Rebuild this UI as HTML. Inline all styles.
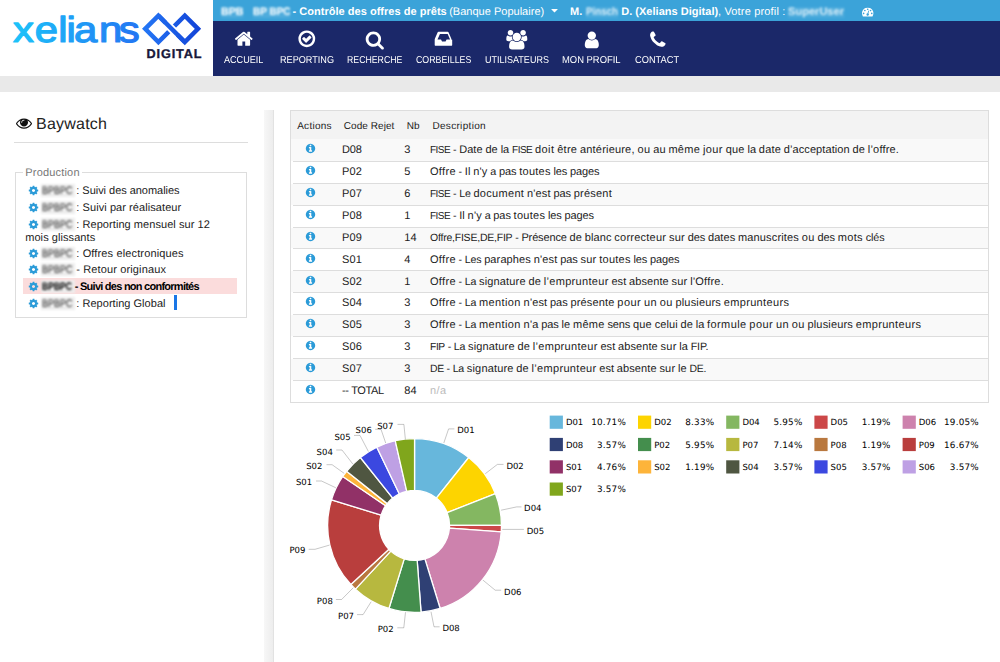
<!DOCTYPE html>
<html lang="fr"><head><meta charset="utf-8"><title>Baywatch</title>
<style>
html,body{margin:0;padding:0}
body{text-rendering:geometricPrecision;width:1000px;height:662px;overflow:hidden;background:#fff;position:relative;font-family:"Liberation Sans",sans-serif;color:#222}
.abs,.ic,.t{position:absolute}
.t{white-space:pre;line-height:1}
.ic{display:block;overflow:visible}
.w{display:inline-block;white-space:pre}
.s{display:inline-block;white-space:pre;transform-origin:0 50%}
.blur{filter:blur(0.9px);background:rgba(255,255,255,.1)}
.blur2{filter:blur(1.1px)}
#topbar{left:213px;top:0;width:787px;height:21px;background:#3ba3d9}
#nav{left:213px;top:21px;width:787px;height:54.5px;background:#1b2869}
#strip{left:0;top:75.5px;width:1000px;height:16.3px;background:#e9e9e9}
.nv{color:#fff;font-size:10px}
.tb{color:#fff;font-size:11px;top:6px}
.b{font-weight:bold}
.li{font-size:11px;color:#222}
.th{font-size:10px;color:#222}
.td{font-size:11px;color:#222}
.lg,.pl{font-family:"DejaVu Sans",sans-serif;font-size:8.5px;color:#000}
</style></head><body>

<div class="abs" id="topbar"></div><div class="abs" id="nav"></div><div class="abs" id="strip"></div>
<svg class="abs" style="left:0;top:0" width="213" height="75" viewBox="0 0 213 75">
<defs><linearGradient id="g1" x1="12" y1="0" x2="138" y2="0" gradientUnits="userSpaceOnUse"><stop offset="0" stop-color="#1cc4f9"/><stop offset="1" stop-color="#2276f3"/></linearGradient>
<linearGradient id="g1b" x1="11" y1="0" x2="126" y2="0" gradientUnits="userSpaceOnUse"><stop offset="0" stop-color="#1cc4f9"/><stop offset="1" stop-color="#2276f3"/></linearGradient>
<linearGradient id="g2" x1="142" y1="0" x2="202" y2="0" gradientUnits="userSpaceOnUse"><stop offset="0" stop-color="#2478f6"/><stop offset="1" stop-color="#1241d6"/></linearGradient></defs>
<text transform="scale(1.1,0.95)" x="11.86 31.64 52.85 60.53 67.2 89.9 107.9" y="44.2" font-family="Liberation Sans, sans-serif" font-size="38" fill="url(#g1b)" stroke="url(#g1b)" stroke-width="1.3" stroke-linejoin="round">xelians</text>
<g fill="none" stroke="url(#g2)" stroke-width="4.5" stroke-linejoin="miter">
<path d="M171.6 28.8 L158.4 42 L145.2 28.8 L158.4 15.6 Z M171.6 28.8 L184.8 15.6 L198 28.8 L184.8 42 Z"/>
<path d="M165.6 22.8 L177.6 34.8" stroke="#fff" stroke-width="8.1"/>
<path d="M158.4 15.6 L184.8 42"/>
</g>
<text x="146.6" y="58" font-family="Liberation Sans, sans-serif" font-size="12.7" font-weight="bold" letter-spacing="0.85" fill="#17183a" stroke="#17183a" stroke-width="0.35">DIGITAL</text>
</svg>
<span class="t tb b blur" style="left:221px;top:6.5px;transform:scaleX(0.9684);transform-origin:0 0;">BPB</span>
<span class="t tb b blur" style="left:253px;top:6.5px;transform:scaleX(0.9063);transform-origin:0 0;">BP BPC</span>
<span class="t tb b" style="left:292.5px;top:6.5px;letter-spacing:0.027px;">- Contrôle des offres de prêts</span>
<span class="t tb" style="left:449.2px;top:6.5px;letter-spacing:0.012px;">(Banque Populaire)</span>
<svg class="ic" style="left:549px;top:4.5px;width:11.00px;height:11px;" viewBox="0 0 1792 1792"><path fill="#fff" d="M1408 704q0 26-19 45l-448 448q-19 19-45 19t-45-19l-448-448q-19-19-19-45t19-45 45-19h896q26 0 45 19t19 45z"/></svg>
<span class="t tb b" style="left:570px;top:6.5px;">M.</span>
<span class="t tb b blur" style="left:586px;top:6.5px;opacity:.8;transform:scaleX(0.8870);transform-origin:0 0;">Pinsch</span>
<span class="t tb b" style="left:621.2px;top:6.5px;letter-spacing:0.022px;">D. (Xelians Digital)</span>
<span class="t tb" style="left:718px;top:6.5px;letter-spacing:0.166px;">, Votre profil :</span>
<span class="t tb b blur" style="left:788px;top:6.5px;opacity:.8;transform:scaleX(1.0065);transform-origin:0 0;">SuperUser</span>
<svg class="ic" style="left:861.8px;top:6px;width:11.40px;height:11.4px;" viewBox="0 0 1792 1792"><path fill="#fff" d="M384 1152q0-53-37.500-90.500t-90.500-37.500-90.500 37.500-37.500 90.500 37.500 90.500 90.500 37.500 90.500-37.500 37.500-90.500zm192-448q0-53-37.500-90.500t-90.500-37.500-90.500 37.500-37.500 90.500 37.500 90.500 90.500 37.500 90.500-37.500 37.500-90.500zm428 481l101-382q6-26-7.500-48.500t-38.500-29.500-48 6.500-30 39.500l-101 382q-60 5-107 43.500t-63 98.500q-20 77 20 146t117 89 146-20 89-117q16-60-6-117t-72-91zm660-33q0-53-37.500-90.500t-90.500-37.500-90.500 37.500-37.500 90.500 37.500 90.500 90.500 37.500 90.500-37.500 37.500-90.500zm-640-640q0-53-37.500-90.500t-90.500-37.500-90.500 37.500-37.500 90.500 37.500 90.500 90.500 37.500 90.500-37.500 37.500-90.500zm448 192q0-53-37.500-90.500t-90.500-37.500-90.500 37.500-37.500 90.500 37.500 90.500 90.500 37.500 90.500-37.500 37.500-90.500zm320 448q0 261-141 483-19 29-54 29h-1402q-35 0-54-29-141-221-141-483 0-182 71-348t191-286 286-191 348-71 348 71 286 191 191 286 71 348z"/></svg>
<span class="t nv" style="left:223.60000000000002px;top:55.6px;transform:scaleX(0.9064);transform-origin:0 0;">ACCUEIL</span>
<svg class="ic" style="left:234.0px;top:29.1px;width:19.60px;height:19.6px;" viewBox="0 0 1792 1792"><path fill="#fff" d="M1472 992v480q0 26-19 45t-45 19h-384v-384h-256v384h-384q-26 0-45-19t-19-45v-480q0-1 .5-3t.5-3l575-474 575 474q1 2 1 6zm223-69l-62 74q-8 9-21 11h-3q-13 0-21-7l-692-577-692 577q-12 8-24 7-13-2-21-11l-62-74q-8-10-7-23.500t11-21.500l719-599q32-26 76-26t76 26l244 204v-195q0-14 9-23t23-9h192q14 0 23 9t9 23v408l219 182q10 8 11 21.500t-7 23.500z"/></svg>
<span class="t nv" style="left:279.8px;top:55.6px;transform:scaleX(0.9109);transform-origin:0 0;">REPORTING</span>
<svg class="ic" style="left:296.9px;top:29.1px;width:19.60px;height:19.6px;" viewBox="0 0 1792 1792"><path fill="#fff" d="M1299 813l-422 422q-19 19-45 19t-45-19l-294-294q-19-19-19-45t19-45l102-102q19-19 45-19t45 19l147 147 275-275q19-19 45-19t45 19l102 102q19 19 19 45t-19 45zm141 83q0-148-73-273t-198-198-273-73-273 73-198 198-73 273 73 273 198 198 273 73 273-73 198-198 73-273zm224 0q0 209-103 385.500t-279.500 279.500-385.500 103-385.500-103-279.500-279.500-103-385.500 103-385.500 279.500-279.500 385.500-103 385.500 103 279.500 279.500 103 385.500z"/></svg>
<span class="t nv" style="left:347.3px;top:55.6px;transform:scaleX(0.8746);transform-origin:0 0;">RECHERCHE</span>
<svg class="ic" style="left:365.0px;top:29.900000000000002px;width:19.60px;height:19.6px;" viewBox="0 0 1792 1792"><path fill="#fff" d="M1216 832q0-185-131.500-316.500t-316.500-131.500-316.500 131.500-131.500 316.500 131.500 316.500 316.500 131.500 316.500-131.500 131.500-316.500zm512 832q0 52-38 90t-90 38q-54 0-90-38l-343-342q-179 124-399 124-143 0-273.500-55.500t-225-150-150-225-55.500-273.500 55.500-273.500 150-225 225-150 273.500-55.500 273.500 55.500 225 150 150 225 55.500 273.500q0 220-124 399l343 343q37 37 37 90z"/></svg>
<span class="t nv" style="left:415.8px;top:55.6px;transform:scaleX(0.8804);transform-origin:0 0;">CORBEILLES</span>
<svg class="ic" style="left:433.9px;top:29.3px;width:19.60px;height:19.6px;" viewBox="0 0 1792 1792"><path fill="#fff" d="M1151 960h316q-1-3-2.500-8t-2.500-8l-212-496h-708l-212 496q-1 2-2.500 8t-2.500 8h316l95 192h320zm513 30v482q0 26-19 45t-45 19h-1472q-26 0-45-19t-19-45v-482q0-62 25-123l238-552q10-25 36.500-42t52.500-17h832q26 0 52.500 17t36.500 42l238 552q25 61 25 123z"/></svg>
<span class="t nv" style="left:484.8px;top:55.6px;transform:scaleX(0.9008);transform-origin:0 0;">UTILISATEURS</span>
<svg class="ic" style="left:506.7px;top:29.8px;width:21.00px;height:19.6px;" viewBox="0 0 1920 1792"><path fill="#fff" d="M529 896q-162 5-265 128h-134q-82 0-138-40.500t-56-118.500q0-353 124-353 6 0 43.500 21t97.500 42.500 119 21.500q67 0 133-23-5 37-5 66 0 139 81 256zm1071 637q0 120-73 189.500t-194 69.500h-874q-121 0-194-69.500t-73-189.500q0-53 3.500-103.500t14-109 26.500-108.500 43-97.500 62-81 85.500-53.500 111.500-20q10 0 43 21.500t73 48 107 48 135 21.500 135-21.500 107-48 73-48 43-21.500q61 0 111.500 20t85.500 53.500 62 81 43 97.500 26.500 108.500 14 109 3.500 103.500zm-1024-1277q0 106-75 181t-181 75-181-75-75-181 75-181 181-75 181 75 75 181zm704 384q0 159-112.500 271.500t-271.500 112.500-271.500-112.500-112.500-271.500 112.500-271.500 271.500-112.500 271.500 112.500 112.500 271.500zm576 225q0 78-56 118.500t-138 40.500h-134q-103-123-265-128 81-117 81-256 0-29-5-66 66 23 133 23 59 0 119-21.500t97.500-42.500 43.500-21q124 0 124 353zm-128-609q0 106-75 181t-181 75-181-75-75-181 75-181 181-75 181 75 75 181z"/></svg>
<span class="t nv" style="left:562.3px;top:55.6px;transform:scaleX(0.9416);transform-origin:0 0;">MON PROFIL</span>
<svg class="ic" style="left:581.9000000000001px;top:29.6px;width:19.60px;height:19.6px;" viewBox="0 0 1792 1792"><path fill="#fff" d="M1536 1399q0 109-62.500 187t-150.500 78h-854q-88 0-150.500-78t-62.500-187q0-85 8.500-160.500t31.500-152 58.500-131 94-89 134.500-34.500q131 128 313 128t313-128q76 0 134.500 34.500t94 89 58.500 131 31.500 152 8.500 160.500zm-256-887q0 159-112.500 271.500t-271.500 112.500-271.500-112.500-112.500-271.500 112.500-271.500 271.500-112.500 271.500 112.500 112.500 271.500z"/></svg>
<span class="t nv" style="left:635.0px;top:55.6px;transform:scaleX(0.9266);transform-origin:0 0;">CONTACT</span>
<svg class="ic" style="left:647.6px;top:29.6px;width:19.60px;height:19.6px;" viewBox="0 0 1792 1792"><path fill="#fff" d="M1600 1240q0 27-10 70.500t-21 68.500q-21 50-122 106-94 51-186 51-27 0-53-3.500t-57.500-12.500-47-14.500-55.500-20.500-49-18q-98-35-175-83-127-79-264-216t-216-264q-48-77-83-175-3-9-18-49t-20.500-55.500-14.500-47-12.500-57.500-3.500-53q0-92 51-186 56-101 106-122 25-11 68.500-21t70.500-10q14 0 21 3 18 6 53 76 11 19 30 54t35 63.500 31 53.500q3 4 17.500 25t21.500 35.500 7 28.500q0 20-28.500 50t-62 55-62 53-28.500 46q0 9 5 22.500t8.500 20.500 14 24 11.500 19q76 137 174 235t235 174q2 1 19 11.500t24 14 20.500 8.500 22.500 5q18 0 46-28.500t53-62 55-62 50-28.500q14 0 28.500 7t35.500 21.500 25 17.500q25 15 53.500 31t63.500 35 54 30q70 35 76 53 3 7 3 21z"/></svg>
<svg class="ic" style="left:16.3px;top:114.8px;width:16.00px;height:16px;" viewBox="0 0 1792 1792"><path fill="#111" d="M1664 960q-152-236-381-353 61 104 61 225 0 185-131.500 316.500t-316.500 131.500-316.500-131.500-131.500-316.500q0-121 61-225-229 117-381 353 133 205 333.500 326.500t434.500 121.500 434.500-121.500 333.500-326.500zm-720-384q0-20-14-34t-34-14q-125 0-214.500 89.500t-89.500 214.500q0 20 14 34t34 14 34-14 14-34q0-86 61-147t147-61q20 0 34-14t14-34zm848 384q0 34-20 69-140 230-376.500 368.500t-499.500 138.500-499.500-139-376.500-368q-20-35-20-69t20-69q140-229 376.500-368t499.500-139 499.500 139 376.500 368q20 35 20 69z"/></svg>
<span class="t " style="left:36px;top:117px;font-size:16px;color:#222;letter-spacing:0.232px;">Baywatch</span>
<div class="abs" style="left:14px;top:142px;width:234px;height:1px;background:#ddd"></div>
<div class="abs" style="left:15px;top:172px;width:232px;height:146px;border:1px solid #ddd;box-sizing:border-box"></div>
<div class="abs" style="left:23px;top:166px;width:59px;height:12px;background:#fff"></div>
<span class="t " style="left:25.3px;top:168.2px;font-size:11px;color:#777;letter-spacing:0.18px;">Production</span>
<div class="abs" style="left:23px;top:278px;width:214px;height:16px;background:#fbdcdc"></div>
<svg class="ic" style="left:27.6px;top:185.2px;width:11.00px;height:11px;" viewBox="0 0 1792 1792"><path fill="#2b9bd8" d="M1152 896q0-106-75-181t-181-75-181 75-75 181 75 181 181 75 181-75 75-181zm512-109v222q0 12-8 23t-20 13l-185 28q-19 54-39 91 35 50 107 138 10 12 10 25t-9 23q-27 37-99 108t-94 71q-12 0-26-9l-138-108q-44 23-91 38-16 136-29 186-7 28-36 28h-222q-14 0-24.500-8.500t-11.500-21.500l-28-184q-49-16-90-37l-141 107q-10 9-25 9-14 0-25-11-126-114-165-168-7-10-7-23 0-12 8-23 15-21 51-66.500t54-70.500q-27-50-41-99l-183-27q-13-2-21-12.500t-8-23.500v-222q0-12 8-23t19-13l186-28q14-46 39-92-40-57-107-138-10-12-10-24 0-10 9-23 26-36 98.500-107.500t94.500-71.500q13 0 26 10l138 107q44-23 91-38 16-136 29-186 7-28 36-28h222q14 0 24.500 8.500t11.500 21.500l28 184q49 16 90 37l142-107q9-9 24-9 13 0 25 10 129 119 165 170 7 8 7 22 0 12-8 23-15 21-51 66.500t-54 70.500q26 50 41 98l183 28q13 2 21 12.500t8 23.500z"/></svg>
<div class="abs" style="left:40.5px;top:184.1px;width:34px;height:13px;background:#ededed;filter:blur(1.2px)"></div>
<span class="t li blur2" style="left:42px;top:186.0px;color:#000;opacity:.85;transform:scaleX(0.8178);transform-origin:0 0;">BPBPC</span>
<span class="t li" style="left:76.3px;top:186.0px;letter-spacing:-0.033px;">: Suivi des anomalies</span>
<svg class="ic" style="left:27.6px;top:202.2px;width:11.00px;height:11px;" viewBox="0 0 1792 1792"><path fill="#2b9bd8" d="M1152 896q0-106-75-181t-181-75-181 75-75 181 75 181 181 75 181-75 75-181zm512-109v222q0 12-8 23t-20 13l-185 28q-19 54-39 91 35 50 107 138 10 12 10 25t-9 23q-27 37-99 108t-94 71q-12 0-26-9l-138-108q-44 23-91 38-16 136-29 186-7 28-36 28h-222q-14 0-24.500-8.500t-11.500-21.500l-28-184q-49-16-90-37l-141 107q-10 9-25 9-14 0-25-11-126-114-165-168-7-10-7-23 0-12 8-23 15-21 51-66.500t54-70.500q-27-50-41-99l-183-27q-13-2-21-12.500t-8-23.500v-222q0-12 8-23t19-13l186-28q14-46 39-92-40-57-107-138-10-12-10-24 0-10 9-23 26-36 98.500-107.500t94.500-71.500q13 0 26 10l138 107q44-23 91-38 16-136 29-186 7-28 36-28h222q14 0 24.500 8.500t11.500 21.500l28 184q49 16 90 37l142-107q9-9 24-9 13 0 25 10 129 119 165 170 7 8 7 22 0 12-8 23-15 21-51 66.500t-54 70.500q26 50 41 98l183 28q13 2 21 12.500t8 23.500z"/></svg>
<div class="abs" style="left:40.5px;top:201.1px;width:34px;height:13px;background:#ededed;filter:blur(1.2px)"></div>
<span class="t li blur2" style="left:42px;top:203.0px;color:#000;opacity:.85;transform:scaleX(0.8178);transform-origin:0 0;">BPBPC</span>
<span class="t li" style="left:76.3px;top:203.0px;letter-spacing:0.071px;">: Suivi par réalisateur</span>
<svg class="ic" style="left:27.6px;top:219.2px;width:11.00px;height:11px;" viewBox="0 0 1792 1792"><path fill="#2b9bd8" d="M1152 896q0-106-75-181t-181-75-181 75-75 181 75 181 181 75 181-75 75-181zm512-109v222q0 12-8 23t-20 13l-185 28q-19 54-39 91 35 50 107 138 10 12 10 25t-9 23q-27 37-99 108t-94 71q-12 0-26-9l-138-108q-44 23-91 38-16 136-29 186-7 28-36 28h-222q-14 0-24.500-8.500t-11.500-21.500l-28-184q-49-16-90-37l-141 107q-10 9-25 9-14 0-25-11-126-114-165-168-7-10-7-23 0-12 8-23 15-21 51-66.500t54-70.500q-27-50-41-99l-183-27q-13-2-21-12.500t-8-23.500v-222q0-12 8-23t19-13l186-28q14-46 39-92-40-57-107-138-10-12-10-24 0-10 9-23 26-36 98.500-107.500t94.500-71.500q13 0 26 10l138 107q44-23 91-38 16-136 29-186 7-28 36-28h222q14 0 24.500 8.500t11.500 21.500l28 184q49 16 90 37l142-107q9-9 24-9 13 0 25 10 129 119 165 170 7 8 7 22 0 12-8 23-15 21-51 66.500t-54 70.500q26 50 41 98l183 28q13 2 21 12.500t8 23.500z"/></svg>
<div class="abs" style="left:40.5px;top:218.1px;width:34px;height:13px;background:#ededed;filter:blur(1.2px)"></div>
<span class="t li blur2" style="left:42px;top:220.0px;color:#000;opacity:.85;transform:scaleX(0.8178);transform-origin:0 0;">BPBPC</span>
<span class="t li" style="left:76.3px;top:220.0px;letter-spacing:0.057px;">: Reporting mensuel sur 12</span>
<svg class="ic" style="left:27.6px;top:248.20000000000002px;width:11.00px;height:11px;" viewBox="0 0 1792 1792"><path fill="#2b9bd8" d="M1152 896q0-106-75-181t-181-75-181 75-75 181 75 181 181 75 181-75 75-181zm512-109v222q0 12-8 23t-20 13l-185 28q-19 54-39 91 35 50 107 138 10 12 10 25t-9 23q-27 37-99 108t-94 71q-12 0-26-9l-138-108q-44 23-91 38-16 136-29 186-7 28-36 28h-222q-14 0-24.500-8.500t-11.500-21.500l-28-184q-49-16-90-37l-141 107q-10 9-25 9-14 0-25-11-126-114-165-168-7-10-7-23 0-12 8-23 15-21 51-66.500t54-70.500q-27-50-41-99l-183-27q-13-2-21-12.500t-8-23.500v-222q0-12 8-23t19-13l186-28q14-46 39-92-40-57-107-138-10-12-10-24 0-10 9-23 26-36 98.500-107.500t94.500-71.500q13 0 26 10l138 107q44-23 91-38 16-136 29-186 7-28 36-28h222q14 0 24.500 8.500t11.500 21.500l28 184q49 16 90 37l142-107q9-9 24-9 13 0 25 10 129 119 165 170 7 8 7 22 0 12-8 23-15 21-51 66.500t-54 70.500q26 50 41 98l183 28q13 2 21 12.500t8 23.500z"/></svg>
<div class="abs" style="left:40.5px;top:247.10000000000002px;width:34px;height:13px;background:#ededed;filter:blur(1.2px)"></div>
<span class="t li blur2" style="left:42px;top:249.00000000000003px;color:#000;opacity:.85;transform:scaleX(0.8178);transform-origin:0 0;">BPBPC</span>
<span class="t li" style="left:76.3px;top:249.00000000000003px;letter-spacing:0.135px;">: Offres electroniques</span>
<svg class="ic" style="left:27.6px;top:264.20000000000005px;width:11.00px;height:11px;" viewBox="0 0 1792 1792"><path fill="#2b9bd8" d="M1152 896q0-106-75-181t-181-75-181 75-75 181 75 181 181 75 181-75 75-181zm512-109v222q0 12-8 23t-20 13l-185 28q-19 54-39 91 35 50 107 138 10 12 10 25t-9 23q-27 37-99 108t-94 71q-12 0-26-9l-138-108q-44 23-91 38-16 136-29 186-7 28-36 28h-222q-14 0-24.500-8.500t-11.500-21.500l-28-184q-49-16-90-37l-141 107q-10 9-25 9-14 0-25-11-126-114-165-168-7-10-7-23 0-12 8-23 15-21 51-66.500t54-70.500q-27-50-41-99l-183-27q-13-2-21-12.500t-8-23.500v-222q0-12 8-23t19-13l186-28q14-46 39-92-40-57-107-138-10-12-10-24 0-10 9-23 26-36 98.500-107.500t94.500-71.500q13 0 26 10l138 107q44-23 91-38 16-136 29-186 7-28 36-28h222q14 0 24.500 8.500t11.500 21.500l28 184q49 16 90 37l142-107q9-9 24-9 13 0 25 10 129 119 165 170 7 8 7 22 0 12-8 23-15 21-51 66.500t-54 70.500q26 50 41 98l183 28q13 2 21 12.500t8 23.500z"/></svg>
<div class="abs" style="left:40.5px;top:263.1px;width:34px;height:13px;background:#ededed;filter:blur(1.2px)"></div>
<span class="t li blur2" style="left:42px;top:265.0px;color:#000;opacity:.85;transform:scaleX(0.8178);transform-origin:0 0;">BPBPC</span>
<span class="t li" style="left:76.3px;top:265.0px;letter-spacing:0.127px;">- Retour originaux</span>
<svg class="ic" style="left:27.6px;top:281.20000000000005px;width:11.00px;height:11px;" viewBox="0 0 1792 1792"><path fill="#2b9bd8" d="M1152 896q0-106-75-181t-181-75-181 75-75 181 75 181 181 75 181-75 75-181zm512-109v222q0 12-8 23t-20 13l-185 28q-19 54-39 91 35 50 107 138 10 12 10 25t-9 23q-27 37-99 108t-94 71q-12 0-26-9l-138-108q-44 23-91 38-16 136-29 186-7 28-36 28h-222q-14 0-24.500-8.500t-11.500-21.500l-28-184q-49-16-90-37l-141 107q-10 9-25 9-14 0-25-11-126-114-165-168-7-10-7-23 0-12 8-23 15-21 51-66.500t54-70.500q-27-50-41-99l-183-27q-13-2-21-12.500t-8-23.500v-222q0-12 8-23t19-13l186-28q14-46 39-92-40-57-107-138-10-12-10-24 0-10 9-23 26-36 98.500-107.500t94.500-71.500q13 0 26 10l138 107q44-23 91-38 16-136 29-186 7-28 36-28h222q14 0 24.500 8.500t11.500 21.500l28 184q49 16 90 37l142-107q9-9 24-9 13 0 25 10 129 119 165 170 7 8 7 22 0 12-8 23-15 21-51 66.500t-54 70.500q26 50 41 98l183 28q13 2 21 12.500t8 23.500z"/></svg>
<div class="abs" style="left:40.5px;top:280.1px;width:34px;height:13px;background:#ededed;filter:blur(1.2px)"></div>
<span class="t li b blur2" style="left:42px;top:282.0px;color:#000;transform:scaleX(0.7789);transform-origin:0 0;">BPBPC</span>
<span class="t li b" style="left:74.8px;top:282.0px;color:#000;letter-spacing:-0.748px;">- Suivi des non conformités</span>
<svg class="ic" style="left:27.6px;top:298.20000000000005px;width:11.00px;height:11px;" viewBox="0 0 1792 1792"><path fill="#2b9bd8" d="M1152 896q0-106-75-181t-181-75-181 75-75 181 75 181 181 75 181-75 75-181zm512-109v222q0 12-8 23t-20 13l-185 28q-19 54-39 91 35 50 107 138 10 12 10 25t-9 23q-27 37-99 108t-94 71q-12 0-26-9l-138-108q-44 23-91 38-16 136-29 186-7 28-36 28h-222q-14 0-24.500-8.500t-11.500-21.500l-28-184q-49-16-90-37l-141 107q-10 9-25 9-14 0-25-11-126-114-165-168-7-10-7-23 0-12 8-23 15-21 51-66.500t54-70.500q-27-50-41-99l-183-27q-13-2-21-12.500t-8-23.500v-222q0-12 8-23t19-13l186-28q14-46 39-92-40-57-107-138-10-12-10-24 0-10 9-23 26-36 98.500-107.500t94.500-71.500q13 0 26 10l138 107q44-23 91-38 16-136 29-186 7-28 36-28h222q14 0 24.500 8.500t11.500 21.500l28 184q49 16 90 37l142-107q9-9 24-9 13 0 25 10 129 119 165 170 7 8 7 22 0 12-8 23-15 21-51 66.500t-54 70.500q26 50 41 98l183 28q13 2 21 12.500t8 23.500z"/></svg>
<div class="abs" style="left:40.5px;top:297.1px;width:34px;height:13px;background:#ededed;filter:blur(1.2px)"></div>
<span class="t li blur2" style="left:42px;top:299.0px;color:#000;opacity:.85;transform:scaleX(0.8178);transform-origin:0 0;">BPBPC</span>
<span class="t li" style="left:76.3px;top:299.0px;letter-spacing:0.031px;">: Reporting Global</span>
<span class="t li" style="left:25.2px;top:233.0px;letter-spacing:0.071px;">mois glissants</span>
<div class="abs" style="left:173.8px;top:295px;width:3px;height:14.6px;background:#1a76e6"></div>
<div class="abs" style="left:264px;top:110px;width:10px;height:552px;background:linear-gradient(90deg,#f7f7f7,#ededed);border-right:1px solid #e2e2e2;box-sizing:border-box"></div>
<div class="abs" style="left:290px;top:110px;width:699px;height:293px;border:1px solid #ddd;box-sizing:border-box;background:#fff"></div>
<div class="abs" style="left:291px;top:111px;width:697px;height:28.5px;background:#f3f3f3"></div>
<span class="t th" style="left:297.2px;top:122.2px;letter-spacing:0.26px;">Actions</span>
<span class="t th" style="left:343.8px;top:122.2px;letter-spacing:0.06px;">Code Rejet</span>
<span class="t th" style="left:406.8px;top:122.2px;letter-spacing:0.1px;">Nb</span>
<span class="t th" style="left:432.4px;top:122.2px;letter-spacing:0.32px;">Description</span>
<div class="abs" style="left:291px;top:139px;width:697px;height:22px;background:#f9f9f9"></div>
<svg class="ic" style="left:305.0px;top:143.08px;width:11.00px;height:11px;" viewBox="0 0 1792 1792"><path fill="#2b9bd8" d="M1152 1376v-160q0-14-9-23t-23-9h-96v-512q0-14-9-23t-23-9h-320q-14 0-23 9t-9 23v160q0 14 9 23t23 9h96v320h-96q-14 0-23 9t-9 23v160q0 14 9 23t23 9h448q14 0 23-9t9-23zm-128-896v-160q0-14-9-23t-23-9h-192q-14 0-23 9t-9 23v160q0 14 9 23t23 9h192q14 0 23-9t9-23zm640 416q0 209-103 385.500t-279.500 279.500-385.500 103-385.500-103-279.500-279.500-103-385.500 103-385.500 279.500-279.500 385.500-103 385.500 103 279.500 279.500 103 385.500z"/></svg>
<span class="t td" style="left:342.0px;top:144.6px;letter-spacing:-0.194px;">D08</span>
<span class="t td" style="left:404.3px;top:144.6px;">3</span>
<span class="t td" style="left:430.0px;top:144.6px;"><span class="w" style="width:23.00px;font-size:10.05px;letter-spacing:-0.527px">FISE </span><span class="w" style="width:6.19px;font-size:10.63px;letter-spacing:-0.122px">- </span><span class="w" style="width:26.19px;letter-spacing:0.043px">Date </span><span class="w" style="width:15.27px;letter-spacing:0.126px">de </span><span class="w" style="width:11.38px;letter-spacing:0.027px">la </span><span class="w" style="width:23.00px;font-size:10.05px;letter-spacing:-0.527px">FISE </span><span class="w" style="width:22.18px;letter-spacing:0.416px">doit </span><span class="w" style="width:22.82px;letter-spacing:0.272px">être </span><span class="w" style="width:57.45px;letter-spacing:0.190px">antérieure, </span><span class="w" style="width:15.74px;letter-spacing:0.360px">ou </span><span class="w" style="width:15.23px;letter-spacing:0.105px">au </span><span class="w" style="width:34.53px;letter-spacing:0.300px">même </span><span class="w" style="width:22.78px;letter-spacing:0.417px">jour </span><span class="w" style="width:21.80px;letter-spacing:0.226px">que </span><span class="w" style="width:11.38px;letter-spacing:0.027px">la </span><span class="w" style="width:24.95px;letter-spacing:0.191px">date </span><span class="w" style="width:68.77px;letter-spacing:0.091px">d’acceptation </span><span class="w" style="width:15.27px;letter-spacing:0.126px">de </span><span class="w" style="width:31.31px;letter-spacing:0.193px">l’offre.</span></span>
<div class="abs" style="left:293px;top:161px;width:695px;height:1px;background:#ddd"></div>
<svg class="ic" style="left:305.0px;top:164.99000000000004px;width:11.00px;height:11px;" viewBox="0 0 1792 1792"><path fill="#2b9bd8" d="M1152 1376v-160q0-14-9-23t-23-9h-96v-512q0-14-9-23t-23-9h-320q-14 0-23 9t-9 23v160q0 14 9 23t23 9h96v320h-96q-14 0-23 9t-9 23v160q0 14 9 23t23 9h448q14 0 23-9t9-23zm-128-896v-160q0-14-9-23t-23-9h-192q-14 0-23 9t-9 23v160q0 14 9 23t23 9h192q14 0 23-9t9-23zm640 416q0 209-103 385.500t-279.500 279.500-385.500 103-385.500-103-279.500-279.500-103-385.500 103-385.500 279.500-279.500 385.500-103 385.500 103 279.500 279.500 103 385.500z"/></svg>
<span class="t td" style="left:342.0px;top:166.6px;letter-spacing:0.111px;">P02</span>
<span class="t td" style="left:404.3px;top:166.6px;">5</span>
<span class="t td" style="left:430.0px;top:166.6px;"><span class="w" style="width:28.60px;letter-spacing:0.314px">Offre </span><span class="w" style="width:6.19px;font-size:10.63px;letter-spacing:-0.122px">- </span><span class="w" style="width:8.43px;letter-spacing:0.082px">Il </span><span class="w" style="width:17.03px;letter-spacing:0.180px">n'y </span><span class="w" style="width:8.69px;font-size:10.82px;letter-spacing:-0.101px">a </span><span class="w" style="width:20.30px;letter-spacing:-0.073px">pas </span><span class="w" style="width:34.31px;letter-spacing:0.263px">toutes </span><span class="w" style="width:16.52px;letter-spacing:-0.104px">les </span><span class="w" style="width:29.34px;letter-spacing:-0.129px">pages</span></span>
<div class="abs" style="left:291px;top:184px;width:697px;height:21px;background:#f9f9f9"></div>
<div class="abs" style="left:293px;top:183px;width:695px;height:1px;background:#ddd"></div>
<svg class="ic" style="left:305.0px;top:186.90000000000003px;width:11.00px;height:11px;" viewBox="0 0 1792 1792"><path fill="#2b9bd8" d="M1152 1376v-160q0-14-9-23t-23-9h-96v-512q0-14-9-23t-23-9h-320q-14 0-23 9t-9 23v160q0 14 9 23t23 9h96v320h-96q-14 0-23 9t-9 23v160q0 14 9 23t23 9h448q14 0 23-9t9-23zm-128-896v-160q0-14-9-23t-23-9h-192q-14 0-23 9t-9 23v160q0 14 9 23t23 9h192q14 0 23-9t9-23zm640 416q0 209-103 385.500t-279.500 279.500-385.500 103-385.500-103-279.500-279.500-103-385.500 103-385.500 279.500-279.500 385.500-103 385.500 103 279.500 279.500 103 385.500z"/></svg>
<span class="t td" style="left:342.0px;top:188.6px;letter-spacing:0.111px;">P07</span>
<span class="t td" style="left:404.3px;top:188.6px;">6</span>
<span class="t td" style="left:430.0px;top:188.6px;"><span class="w" style="width:23.00px;font-size:10.05px;letter-spacing:-0.527px">FISE </span><span class="w" style="width:6.19px;font-size:10.63px;letter-spacing:-0.122px">- </span><span class="w" style="width:14.27px;font-size:10.66px;letter-spacing:-0.187px">Le </span><span class="w" style="width:53.51px;letter-spacing:0.304px">document </span><span class="w" style="width:26.47px;letter-spacing:0.160px">n'est </span><span class="w" style="width:20.30px;letter-spacing:-0.073px">pas </span><span class="w" style="width:38.20px;letter-spacing:0.214px">présent</span></span>
<div class="abs" style="left:293px;top:205px;width:695px;height:1px;background:#ddd"></div>
<svg class="ic" style="left:305.0px;top:208.81000000000003px;width:11.00px;height:11px;" viewBox="0 0 1792 1792"><path fill="#2b9bd8" d="M1152 1376v-160q0-14-9-23t-23-9h-96v-512q0-14-9-23t-23-9h-320q-14 0-23 9t-9 23v160q0 14 9 23t23 9h96v320h-96q-14 0-23 9t-9 23v160q0 14 9 23t23 9h448q14 0 23-9t9-23zm-128-896v-160q0-14-9-23t-23-9h-192q-14 0-23 9t-9 23v160q0 14 9 23t23 9h192q14 0 23-9t9-23zm640 416q0 209-103 385.500t-279.500 279.500-385.500 103-385.500-103-279.500-279.500-103-385.500 103-385.500 279.500-279.500 385.500-103 385.500 103 279.500 279.500 103 385.500z"/></svg>
<span class="t td" style="left:342.0px;top:210.6px;letter-spacing:0.111px;">P08</span>
<span class="t td" style="left:404.3px;top:210.6px;">1</span>
<span class="t td" style="left:430.0px;top:210.6px;"><span class="w" style="width:23.00px;font-size:10.05px;letter-spacing:-0.527px">FISE </span><span class="w" style="width:6.19px;font-size:10.63px;letter-spacing:-0.122px">- </span><span class="w" style="width:8.43px;letter-spacing:0.082px">Il </span><span class="w" style="width:17.03px;letter-spacing:0.180px">n'y </span><span class="w" style="width:8.69px;font-size:10.82px;letter-spacing:-0.101px">a </span><span class="w" style="width:20.30px;letter-spacing:-0.073px">pas </span><span class="w" style="width:34.31px;letter-spacing:0.263px">toutes </span><span class="w" style="width:16.52px;letter-spacing:-0.104px">les </span><span class="w" style="width:29.34px;letter-spacing:-0.129px">pages</span></span>
<div class="abs" style="left:291px;top:228px;width:697px;height:20px;background:#f9f9f9"></div>
<div class="abs" style="left:293px;top:227px;width:695px;height:1px;background:#ddd"></div>
<svg class="ic" style="left:305.0px;top:230.72000000000003px;width:11.00px;height:11px;" viewBox="0 0 1792 1792"><path fill="#2b9bd8" d="M1152 1376v-160q0-14-9-23t-23-9h-96v-512q0-14-9-23t-23-9h-320q-14 0-23 9t-9 23v160q0 14 9 23t23 9h96v320h-96q-14 0-23 9t-9 23v160q0 14 9 23t23 9h448q14 0 23-9t9-23zm-128-896v-160q0-14-9-23t-23-9h-192q-14 0-23 9t-9 23v160q0 14 9 23t23 9h192q14 0 23-9t9-23zm640 416q0 209-103 385.500t-279.500 279.500-385.500 103-385.500-103-279.500-279.500-103-385.500 103-385.500 279.500-279.500 385.500-103 385.500 103 279.500 279.500 103 385.500z"/></svg>
<span class="t td" style="left:342.0px;top:232.6px;letter-spacing:0.111px;">P09</span>
<span class="t td" style="left:404.3px;top:232.6px;">14</span>
<span class="t td" style="left:430.0px;top:232.6px;"><span class="w" style="width:85.23px;font-size:10.52px;letter-spacing:-0.229px">Offre,FISE,DE,FIP </span><span class="w" style="width:6.19px;font-size:10.63px;letter-spacing:-0.122px">- </span><span class="w" style="width:48.14px;letter-spacing:-0.139px">Présence </span><span class="w" style="width:15.27px;letter-spacing:0.126px">de </span><span class="w" style="width:29.52px;letter-spacing:0.091px">blanc </span><span class="w" style="width:54.63px;letter-spacing:0.233px">correcteur </span><span class="w" style="width:18.73px;letter-spacing:0.228px">sur </span><span class="w" style="width:20.35px;letter-spacing:-0.056px">des </span><span class="w" style="width:30.03px;letter-spacing:0.069px">dates </span><span class="w" style="width:63.68px;letter-spacing:0.147px">manuscrites </span><span class="w" style="width:15.74px;letter-spacing:0.360px">ou </span><span class="w" style="width:20.35px;letter-spacing:-0.056px">des </span><span class="w" style="width:27.95px;letter-spacing:0.334px">mots </span><span class="w" style="width:18.82px;font-size:10.79px;letter-spacing:-0.093px">clés</span></span>
<div class="abs" style="left:293px;top:248px;width:695px;height:1px;background:#ddd"></div>
<svg class="ic" style="left:305.0px;top:252.63000000000002px;width:11.00px;height:11px;" viewBox="0 0 1792 1792"><path fill="#2b9bd8" d="M1152 1376v-160q0-14-9-23t-23-9h-96v-512q0-14-9-23t-23-9h-320q-14 0-23 9t-9 23v160q0 14 9 23t23 9h96v320h-96q-14 0-23 9t-9 23v160q0 14 9 23t23 9h448q14 0 23-9t9-23zm-128-896v-160q0-14-9-23t-23-9h-192q-14 0-23 9t-9 23v160q0 14 9 23t23 9h192q14 0 23-9t9-23zm640 416q0 209-103 385.500t-279.500 279.500-385.500 103-385.500-103-279.500-279.500-103-385.500 103-385.500 279.500-279.500 385.500-103 385.500 103 279.500 279.500 103 385.500z"/></svg>
<span class="t td" style="left:342.0px;top:254.6px;letter-spacing:0.111px;">S01</span>
<span class="t td" style="left:404.3px;top:254.6px;">4</span>
<span class="t td" style="left:430.0px;top:254.6px;"><span class="w" style="width:28.60px;letter-spacing:0.314px">Offre </span><span class="w" style="width:6.19px;font-size:10.63px;letter-spacing:-0.122px">- </span><span class="w" style="width:19.35px;font-size:10.64px;letter-spacing:-0.194px">Les </span><span class="w" style="width:49.60px;letter-spacing:0.120px">paraphes </span><span class="w" style="width:26.47px;letter-spacing:0.160px">n'est </span><span class="w" style="width:20.30px;letter-spacing:-0.073px">pas </span><span class="w" style="width:18.73px;letter-spacing:0.228px">sur </span><span class="w" style="width:34.31px;letter-spacing:0.263px">toutes </span><span class="w" style="width:16.52px;letter-spacing:-0.104px">les </span><span class="w" style="width:29.34px;letter-spacing:-0.129px">pages</span></span>
<div class="abs" style="left:291px;top:271px;width:697px;height:21px;background:#f9f9f9"></div>
<div class="abs" style="left:293px;top:270px;width:695px;height:1px;background:#ddd"></div>
<svg class="ic" style="left:305.0px;top:274.54px;width:11.00px;height:11px;" viewBox="0 0 1792 1792"><path fill="#2b9bd8" d="M1152 1376v-160q0-14-9-23t-23-9h-96v-512q0-14-9-23t-23-9h-320q-14 0-23 9t-9 23v160q0 14 9 23t23 9h96v320h-96q-14 0-23 9t-9 23v160q0 14 9 23t23 9h448q14 0 23-9t9-23zm-128-896v-160q0-14-9-23t-23-9h-192q-14 0-23 9t-9 23v160q0 14 9 23t23 9h192q14 0 23-9t9-23zm640 416q0 209-103 385.500t-279.500 279.500-385.500 103-385.500-103-279.500-279.500-103-385.500 103-385.500 279.500-279.500 385.500-103 385.500 103 279.500 279.500 103 385.500z"/></svg>
<span class="t td" style="left:342.0px;top:276.6px;letter-spacing:0.111px;">S02</span>
<span class="t td" style="left:404.3px;top:276.6px;">1</span>
<span class="t td" style="left:430.0px;top:276.6px;"><span class="w" style="width:28.60px;letter-spacing:0.314px">Offre </span><span class="w" style="width:6.19px;font-size:10.63px;letter-spacing:-0.122px">- </span><span class="w" style="width:14.22px;font-size:10.64px;letter-spacing:-0.200px">La </span><span class="w" style="width:49.45px;letter-spacing:0.158px">signature </span><span class="w" style="width:15.27px;letter-spacing:0.126px">de </span><span class="w" style="width:67.72px;letter-spacing:0.317px">l’emprunteur </span><span class="w" style="width:17.58px;letter-spacing:0.043px">est </span><span class="w" style="width:42.54px;letter-spacing:0.089px">absente </span><span class="w" style="width:18.73px;letter-spacing:0.228px">sur </span><span class="w" style="width:33.72px;letter-spacing:0.232px">l'Offre.</span></span>
<div class="abs" style="left:293px;top:292px;width:695px;height:1px;background:#ddd"></div>
<svg class="ic" style="left:305.0px;top:296.45px;width:11.00px;height:11px;" viewBox="0 0 1792 1792"><path fill="#2b9bd8" d="M1152 1376v-160q0-14-9-23t-23-9h-96v-512q0-14-9-23t-23-9h-320q-14 0-23 9t-9 23v160q0 14 9 23t23 9h96v320h-96q-14 0-23 9t-9 23v160q0 14 9 23t23 9h448q14 0 23-9t9-23zm-128-896v-160q0-14-9-23t-23-9h-192q-14 0-23 9t-9 23v160q0 14 9 23t23 9h192q14 0 23-9t9-23zm640 416q0 209-103 385.500t-279.500 279.500-385.500 103-385.500-103-279.500-279.500-103-385.500 103-385.500 279.500-279.500 385.500-103 385.500 103 279.500 279.500 103 385.500z"/></svg>
<span class="t td" style="left:342.0px;top:297.6px;letter-spacing:0.111px;">S04</span>
<span class="t td" style="left:404.3px;top:297.6px;">3</span>
<span class="t td" style="left:430.0px;top:297.6px;"><span class="w" style="width:28.60px;letter-spacing:0.314px">Offre </span><span class="w" style="width:6.19px;font-size:10.63px;letter-spacing:-0.122px">- </span><span class="w" style="width:14.22px;font-size:10.64px;letter-spacing:-0.200px">La </span><span class="w" style="width:44.61px;letter-spacing:0.386px">mention </span><span class="w" style="width:26.47px;letter-spacing:0.160px">n'est </span><span class="w" style="width:20.30px;letter-spacing:-0.073px">pas </span><span class="w" style="width:46.94px;letter-spacing:0.170px">présente </span><span class="w" style="width:26.61px;letter-spacing:0.453px">pour </span><span class="w" style="width:15.84px;letter-spacing:0.412px">un </span><span class="w" style="width:15.74px;letter-spacing:0.360px">ou </span><span class="w" style="width:48.24px;letter-spacing:0.160px">plusieurs </span><span class="w" style="width:65.53px;letter-spacing:0.342px">emprunteurs</span></span>
<div class="abs" style="left:291px;top:315px;width:697px;height:21px;background:#f9f9f9"></div>
<div class="abs" style="left:293px;top:314px;width:695px;height:1px;background:#ddd"></div>
<svg class="ic" style="left:305.0px;top:318.36px;width:11.00px;height:11px;" viewBox="0 0 1792 1792"><path fill="#2b9bd8" d="M1152 1376v-160q0-14-9-23t-23-9h-96v-512q0-14-9-23t-23-9h-320q-14 0-23 9t-9 23v160q0 14 9 23t23 9h96v320h-96q-14 0-23 9t-9 23v160q0 14 9 23t23 9h448q14 0 23-9t9-23zm-128-896v-160q0-14-9-23t-23-9h-192q-14 0-23 9t-9 23v160q0 14 9 23t23 9h192q14 0 23-9t9-23zm640 416q0 209-103 385.500t-279.500 279.500-385.500 103-385.500-103-279.500-279.500-103-385.500 103-385.500 279.500-279.500 385.500-103 385.500 103 279.500 279.500 103 385.500z"/></svg>
<span class="t td" style="left:342.0px;top:319.6px;letter-spacing:0.111px;">S05</span>
<span class="t td" style="left:404.3px;top:319.6px;">3</span>
<span class="t td" style="left:430.0px;top:319.6px;"><span class="w" style="width:28.60px;letter-spacing:0.314px">Offre </span><span class="w" style="width:6.19px;font-size:10.63px;letter-spacing:-0.122px">- </span><span class="w" style="width:14.22px;font-size:10.64px;letter-spacing:-0.200px">La </span><span class="w" style="width:44.61px;letter-spacing:0.386px">mention </span><span class="w" style="width:17.58px;letter-spacing:0.157px">n'a </span><span class="w" style="width:20.30px;letter-spacing:-0.073px">pas </span><span class="w" style="width:11.44px;letter-spacing:0.053px">le </span><span class="w" style="width:34.53px;letter-spacing:0.300px">même </span><span class="w" style="width:25.44px;letter-spacing:-0.144px">sens </span><span class="w" style="width:21.80px;letter-spacing:0.226px">que </span><span class="w" style="width:25.74px;letter-spacing:0.069px">celui </span><span class="w" style="width:15.27px;letter-spacing:0.126px">de </span><span class="w" style="width:11.38px;letter-spacing:0.027px">la </span><span class="w" style="width:42.27px;letter-spacing:0.402px">formule </span><span class="w" style="width:26.61px;letter-spacing:0.453px">pour </span><span class="w" style="width:15.84px;letter-spacing:0.412px">un </span><span class="w" style="width:15.74px;letter-spacing:0.360px">ou </span><span class="w" style="width:48.24px;letter-spacing:0.160px">plusieurs </span><span class="w" style="width:65.53px;letter-spacing:0.342px">emprunteurs</span></span>
<div class="abs" style="left:293px;top:336px;width:695px;height:1px;background:#ddd"></div>
<svg class="ic" style="left:305.0px;top:340.27px;width:11.00px;height:11px;" viewBox="0 0 1792 1792"><path fill="#2b9bd8" d="M1152 1376v-160q0-14-9-23t-23-9h-96v-512q0-14-9-23t-23-9h-320q-14 0-23 9t-9 23v160q0 14 9 23t23 9h96v320h-96q-14 0-23 9t-9 23v160q0 14 9 23t23 9h448q14 0 23-9t9-23zm-128-896v-160q0-14-9-23t-23-9h-192q-14 0-23 9t-9 23v160q0 14 9 23t23 9h192q14 0 23-9t9-23zm640 416q0 209-103 385.500t-279.500 279.500-385.500 103-385.500-103-279.500-279.500-103-385.500 103-385.500 279.500-279.500 385.500-103 385.500 103 279.500 279.500 103 385.500z"/></svg>
<span class="t td" style="left:342.0px;top:341.6px;letter-spacing:0.111px;">S06</span>
<span class="t td" style="left:404.3px;top:341.6px;">3</span>
<span class="t td" style="left:430.0px;top:341.6px;"><span class="w" style="width:17.64px;font-size:10.28px;letter-spacing:-0.375px">FIP </span><span class="w" style="width:6.19px;font-size:10.63px;letter-spacing:-0.122px">- </span><span class="w" style="width:14.22px;font-size:10.64px;letter-spacing:-0.200px">La </span><span class="w" style="width:49.45px;letter-spacing:0.158px">signature </span><span class="w" style="width:15.27px;letter-spacing:0.126px">de </span><span class="w" style="width:67.72px;letter-spacing:0.317px">l’emprunteur </span><span class="w" style="width:17.58px;letter-spacing:0.043px">est </span><span class="w" style="width:42.54px;letter-spacing:0.089px">absente </span><span class="w" style="width:18.73px;letter-spacing:0.228px">sur </span><span class="w" style="width:11.38px;letter-spacing:0.027px">la </span><span class="w" style="width:17.71px;font-size:10.69px;letter-spacing:-0.132px">FIP.</span></span>
<div class="abs" style="left:291px;top:359px;width:697px;height:21px;background:#f9f9f9"></div>
<div class="abs" style="left:293px;top:358px;width:695px;height:1px;background:#ddd"></div>
<svg class="ic" style="left:305.0px;top:362.18px;width:11.00px;height:11px;" viewBox="0 0 1792 1792"><path fill="#2b9bd8" d="M1152 1376v-160q0-14-9-23t-23-9h-96v-512q0-14-9-23t-23-9h-320q-14 0-23 9t-9 23v160q0 14 9 23t23 9h96v320h-96q-14 0-23 9t-9 23v160q0 14 9 23t23 9h448q14 0 23-9t9-23zm-128-896v-160q0-14-9-23t-23-9h-192q-14 0-23 9t-9 23v160q0 14 9 23t23 9h192q14 0 23-9t9-23zm640 416q0 209-103 385.500t-279.500 279.500-385.500 103-385.500-103-279.500-279.500-103-385.500 103-385.500 279.500-279.500 385.500-103 385.500 103 279.500 279.500 103 385.500z"/></svg>
<span class="t td" style="left:342.0px;top:363.6px;letter-spacing:0.111px;">S07</span>
<span class="t td" style="left:404.3px;top:363.6px;">3</span>
<span class="t td" style="left:430.0px;top:363.6px;"><span class="w" style="width:16.45px;font-size:10.43px;letter-spacing:-0.399px">DE </span><span class="w" style="width:6.19px;font-size:10.63px;letter-spacing:-0.122px">- </span><span class="w" style="width:14.22px;font-size:10.64px;letter-spacing:-0.200px">La </span><span class="w" style="width:49.45px;letter-spacing:0.158px">signature </span><span class="w" style="width:15.27px;letter-spacing:0.126px">de </span><span class="w" style="width:67.72px;letter-spacing:0.317px">l’emprunteur </span><span class="w" style="width:17.58px;letter-spacing:0.043px">est </span><span class="w" style="width:42.54px;letter-spacing:0.089px">absente </span><span class="w" style="width:18.73px;letter-spacing:0.228px">sur </span><span class="w" style="width:11.44px;letter-spacing:0.053px">le </span><span class="w" style="width:16.52px;font-size:10.45px;letter-spacing:-0.304px">DE.</span></span>
<div class="abs" style="left:293px;top:380px;width:695px;height:1px;background:#ddd"></div>
<svg class="ic" style="left:305.0px;top:384.09px;width:11.00px;height:11px;" viewBox="0 0 1792 1792"><path fill="#2b9bd8" d="M1152 1376v-160q0-14-9-23t-23-9h-96v-512q0-14-9-23t-23-9h-320q-14 0-23 9t-9 23v160q0 14 9 23t23 9h96v320h-96q-14 0-23 9t-9 23v160q0 14 9 23t23 9h448q14 0 23-9t9-23zm-128-896v-160q0-14-9-23t-23-9h-192q-14 0-23 9t-9 23v160q0 14 9 23t23 9h192q14 0 23-9t9-23zm640 416q0 209-103 385.500t-279.500 279.500-385.500 103-385.500-103-279.500-279.500-103-385.500 103-385.500 279.500-279.500 385.500-103 385.500 103 279.500 279.500 103 385.500z"/></svg>
<span class="t td" style="left:342.0px;top:385.6px;letter-spacing:-0.346px;">-- TOTAL</span>
<span class="t td" style="left:404.3px;top:385.6px;">84</span>
<span class="t td" style="left:430.0px;top:385.6px;color:#bbb;letter-spacing:0.452px;">n/a</span>
<svg class="abs" style="left:0;top:403px" width="1000" height="259" viewBox="0 403 1000 259">
<path d="M414.55 438.55A86.9 86.9 0 0 1 468.73 457.51L436.37 498.09A35.0 35.0 0 0 0 414.55 490.45Z" fill="#67b7dc" stroke="#fff" stroke-width="1.3" stroke-linejoin="round"/>
<path d="M468.73 457.51A86.9 86.9 0 0 1 495.44 493.70L447.13 512.66A35.0 35.0 0 0 0 436.37 498.09Z" fill="#fdd400" stroke="#fff" stroke-width="1.3" stroke-linejoin="round"/>
<path d="M495.44 493.70A86.9 86.9 0 0 1 501.45 525.45L449.55 525.45A35.0 35.0 0 0 0 447.13 512.66Z" fill="#84b761" stroke="#fff" stroke-width="1.3" stroke-linejoin="round"/>
<path d="M501.45 525.45A86.9 86.9 0 0 1 501.21 531.94L449.45 528.07A35.0 35.0 0 0 0 449.55 525.45Z" fill="#cc4748" stroke="#fff" stroke-width="1.3" stroke-linejoin="round"/>
<path d="M501.21 531.94A86.9 86.9 0 0 1 440.16 608.49L424.87 558.90A35.0 35.0 0 0 0 449.45 528.07Z" fill="#cd82ad" stroke="#fff" stroke-width="1.3" stroke-linejoin="round"/>
<path d="M440.16 608.49A86.9 86.9 0 0 1 421.04 612.11L417.17 560.35A35.0 35.0 0 0 0 424.87 558.90Z" fill="#2f4074" stroke="#fff" stroke-width="1.3" stroke-linejoin="round"/>
<path d="M421.04 612.11A86.9 86.9 0 0 1 388.94 608.49L404.23 558.90A35.0 35.0 0 0 0 417.17 560.35Z" fill="#448e4d" stroke="#fff" stroke-width="1.3" stroke-linejoin="round"/>
<path d="M388.94 608.49A86.9 86.9 0 0 1 355.44 589.15L390.74 551.11A35.0 35.0 0 0 0 404.23 558.90Z" fill="#b7b83f" stroke="#fff" stroke-width="1.3" stroke-linejoin="round"/>
<path d="M355.44 589.15A86.9 86.9 0 0 1 350.85 584.56L388.89 549.26A35.0 35.0 0 0 0 390.74 551.11Z" fill="#b9783f" stroke="#fff" stroke-width="1.3" stroke-linejoin="round"/>
<path d="M350.85 584.56A86.9 86.9 0 0 1 331.51 499.84L381.10 515.13A35.0 35.0 0 0 0 388.89 549.26Z" fill="#b93e3d" stroke="#fff" stroke-width="1.3" stroke-linejoin="round"/>
<path d="M331.51 499.84A86.9 86.9 0 0 1 342.75 476.50L385.63 505.73A35.0 35.0 0 0 0 381.10 515.13Z" fill="#913167" stroke="#fff" stroke-width="1.3" stroke-linejoin="round"/>
<path d="M342.75 476.50A86.9 86.9 0 0 1 346.61 471.27L387.19 503.63A35.0 35.0 0 0 0 385.63 505.73Z" fill="#fdb43a" stroke="#fff" stroke-width="1.3" stroke-linejoin="round"/>
<path d="M346.61 471.27A86.9 86.9 0 0 1 360.37 457.51L392.73 498.09A35.0 35.0 0 0 0 387.19 503.63Z" fill="#4f5641" stroke="#fff" stroke-width="1.3" stroke-linejoin="round"/>
<path d="M360.37 457.51A86.9 86.9 0 0 1 376.85 447.16L399.36 493.92A35.0 35.0 0 0 0 392.73 498.09Z" fill="#3b48e0" stroke="#fff" stroke-width="1.3" stroke-linejoin="round"/>
<path d="M376.85 447.16A86.9 86.9 0 0 1 395.21 440.73L406.76 491.33A35.0 35.0 0 0 0 399.36 493.92Z" fill="#bea0e4" stroke="#fff" stroke-width="1.3" stroke-linejoin="round"/>
<path d="M395.21 440.73A86.9 86.9 0 0 1 414.55 438.55L414.55 490.45A35.0 35.0 0 0 0 406.76 491.33Z" fill="#80a61c" stroke="#fff" stroke-width="1.3" stroke-linejoin="round"/>
<polyline fill="none" stroke="#000" stroke-opacity="0.28" stroke-width="0.8" points="405.4,439.5 403.9,424.4 397.5,424.4"/>
<text class="pl" x="393.4" y="428.79999999999995" text-anchor="end">S07</text>
<polyline fill="none" stroke="#000" stroke-opacity="0.28" stroke-width="0.8" points="385.7,443.0 381.0,429.3 375.2,429.3"/>
<text class="pl" x="371.79999999999995" y="433.29999999999995" text-anchor="end">S06</text>
<polyline fill="none" stroke="#000" stroke-opacity="0.28" stroke-width="0.8" points="368.4,451.5 360.0,435.4 354.0,435.4"/>
<text class="pl" x="350.59999999999997" y="439.7" text-anchor="end">S05</text>
<polyline fill="none" stroke="#000" stroke-opacity="0.28" stroke-width="0.8" points="352.8,464.0 342.0,450.0 336.2,450.0"/>
<text class="pl" x="332.79999999999995" y="454.5" text-anchor="end">S04</text>
<polyline fill="none" stroke="#000" stroke-opacity="0.28" stroke-width="0.8" points="344.2,473.4 332.1,464.7 326.5,464.7"/>
<text class="pl" x="322.4" y="469.09999999999997" text-anchor="end">S02</text>
<polyline fill="none" stroke="#000" stroke-opacity="0.28" stroke-width="0.8" points="335.9,487.8 321.5,481.0 316.0,481.0"/>
<text class="pl" x="312.09999999999997" y="485.4" text-anchor="end">S01</text>
<polyline fill="none" stroke="#000" stroke-opacity="0.28" stroke-width="0.8" points="443.8,443.0 448.6,428.9 454.4,428.9"/>
<text class="pl" x="457.29999999999995" y="433.0">D01</text>
<polyline fill="none" stroke="#000" stroke-opacity="0.28" stroke-width="0.8" points="485.3,473.7 497.4,464.4 503.5,464.4"/>
<text class="pl" x="506.4" y="468.79999999999995">D02</text>
<polyline fill="none" stroke="#000" stroke-opacity="0.28" stroke-width="0.8" points="501.1,510.2 516.7,506.9 521.5,506.9"/>
<text class="pl" x="524.1" y="511.29999999999995">D04</text>
<polyline fill="none" stroke="#000" stroke-opacity="0.28" stroke-width="0.8" points="502.3,529.4 518.0,529.4 523.9,529.4"/>
<text class="pl" x="526.6999999999999" y="533.8">D05</text>
<polyline fill="none" stroke="#000" stroke-opacity="0.28" stroke-width="0.8" points="482.8,580.0 495.2,590.2 501.2,590.2"/>
<text class="pl" x="504.09999999999997" y="594.6">D06</text>
<polyline fill="none" stroke="#000" stroke-opacity="0.28" stroke-width="0.8" points="431.0,611.7 434.0,626.8 439.6,626.8"/>
<text class="pl" x="442.4" y="631.1999999999999">D08</text>
<polyline fill="none" stroke="#000" stroke-opacity="0.28" stroke-width="0.8" points="329.5,545.1 315.0,549.3 308.7,549.3"/>
<text class="pl" x="305.4" y="553.3" text-anchor="end">P09</text>
<polyline fill="none" stroke="#000" stroke-opacity="0.28" stroke-width="0.8" points="353.3,587.7 341.6,599.5 335.9,599.5"/>
<text class="pl" x="332.79999999999995" y="603.5" text-anchor="end">P08</text>
<polyline fill="none" stroke="#000" stroke-opacity="0.28" stroke-width="0.8" points="371.1,601.8 363.1,614.6 357.0,614.6"/>
<text class="pl" x="354.0" y="619.0" text-anchor="end">P07</text>
<polyline fill="none" stroke="#000" stroke-opacity="0.28" stroke-width="0.8" points="405.5,612.2 403.8,627.8 397.3,627.8"/>
<text class="pl" x="393.65" y="631.9" text-anchor="end">P02</text>
<rect x="549.7" y="415.6" width="13.2" height="13.2" fill="#67b7dc"/>
<text class="lg" x="565.9000000000001" y="425.40000000000003">D01</text>
<text class="lg" x="626.0" y="425.40000000000003" text-anchor="end" style="font-size:8.8px;letter-spacing:0.22px">10.71%</text>
<rect x="638.0" y="415.6" width="13.2" height="13.2" fill="#fdd400"/>
<text class="lg" x="654.2" y="425.40000000000003">D02</text>
<text class="lg" x="714.3" y="425.40000000000003" text-anchor="end" style="font-size:8.8px;letter-spacing:0.22px">8.33%</text>
<rect x="726.2" y="415.6" width="13.2" height="13.2" fill="#84b761"/>
<text class="lg" x="742.4000000000001" y="425.40000000000003">D04</text>
<text class="lg" x="802.5" y="425.40000000000003" text-anchor="end" style="font-size:8.8px;letter-spacing:0.22px">5.95%</text>
<rect x="814.4" y="415.6" width="13.2" height="13.2" fill="#cc4748"/>
<text class="lg" x="830.6" y="425.40000000000003">D05</text>
<text class="lg" x="890.6999999999999" y="425.40000000000003" text-anchor="end" style="font-size:8.8px;letter-spacing:0.22px">1.19%</text>
<rect x="902.6" y="415.6" width="13.2" height="13.2" fill="#cd82ad"/>
<text class="lg" x="918.8000000000001" y="425.40000000000003">D06</text>
<text class="lg" x="978.9" y="425.40000000000003" text-anchor="end" style="font-size:8.8px;letter-spacing:0.22px">19.05%</text>
<rect x="549.7" y="437.9" width="13.2" height="13.2" fill="#2f4074"/>
<text class="lg" x="565.9000000000001" y="447.7">D08</text>
<text class="lg" x="626.0" y="447.7" text-anchor="end" style="font-size:8.8px;letter-spacing:0.22px">3.57%</text>
<rect x="638.0" y="437.9" width="13.2" height="13.2" fill="#448e4d"/>
<text class="lg" x="654.2" y="447.7">P02</text>
<text class="lg" x="714.3" y="447.7" text-anchor="end" style="font-size:8.8px;letter-spacing:0.22px">5.95%</text>
<rect x="726.2" y="437.9" width="13.2" height="13.2" fill="#b7b83f"/>
<text class="lg" x="742.4000000000001" y="447.7">P07</text>
<text class="lg" x="802.5" y="447.7" text-anchor="end" style="font-size:8.8px;letter-spacing:0.22px">7.14%</text>
<rect x="814.4" y="437.9" width="13.2" height="13.2" fill="#b9783f"/>
<text class="lg" x="830.6" y="447.7">P08</text>
<text class="lg" x="890.6999999999999" y="447.7" text-anchor="end" style="font-size:8.8px;letter-spacing:0.22px">1.19%</text>
<rect x="902.6" y="437.9" width="13.2" height="13.2" fill="#b93e3d"/>
<text class="lg" x="918.8000000000001" y="447.7">P09</text>
<text class="lg" x="978.9" y="447.7" text-anchor="end" style="font-size:8.8px;letter-spacing:0.22px">16.67%</text>
<rect x="549.7" y="460.3" width="13.2" height="13.2" fill="#913167"/>
<text class="lg" x="565.9000000000001" y="470.1">S01</text>
<text class="lg" x="626.0" y="470.1" text-anchor="end" style="font-size:8.8px;letter-spacing:0.22px">4.76%</text>
<rect x="638.0" y="460.3" width="13.2" height="13.2" fill="#fdb43a"/>
<text class="lg" x="654.2" y="470.1">S02</text>
<text class="lg" x="714.3" y="470.1" text-anchor="end" style="font-size:8.8px;letter-spacing:0.22px">1.19%</text>
<rect x="726.2" y="460.3" width="13.2" height="13.2" fill="#4f5641"/>
<text class="lg" x="742.4000000000001" y="470.1">S04</text>
<text class="lg" x="802.5" y="470.1" text-anchor="end" style="font-size:8.8px;letter-spacing:0.22px">3.57%</text>
<rect x="814.4" y="460.3" width="13.2" height="13.2" fill="#3b48e0"/>
<text class="lg" x="830.6" y="470.1">S05</text>
<text class="lg" x="890.6999999999999" y="470.1" text-anchor="end" style="font-size:8.8px;letter-spacing:0.22px">3.57%</text>
<rect x="902.6" y="460.3" width="13.2" height="13.2" fill="#bea0e4"/>
<text class="lg" x="918.8000000000001" y="470.1">S06</text>
<text class="lg" x="978.9" y="470.1" text-anchor="end" style="font-size:8.8px;letter-spacing:0.22px">3.57%</text>
<rect x="549.7" y="482.5" width="13.2" height="13.2" fill="#80a61c"/>
<text class="lg" x="565.9000000000001" y="492.3">S07</text>
<text class="lg" x="626.0" y="492.3" text-anchor="end" style="font-size:8.8px;letter-spacing:0.22px">3.57%</text>
</svg>
</body></html>
